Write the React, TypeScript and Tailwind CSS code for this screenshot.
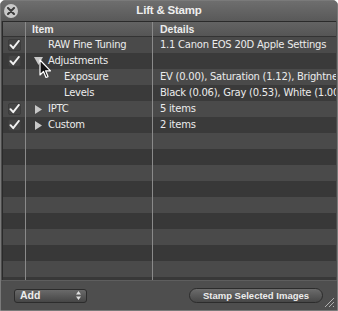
import React from 'react';

type Row = { check: boolean; item: string; details: string; indent: number; arrow?: 'open' | 'closed' };

const rows: Row[] = [
  { check: true, item: 'RAW Fine Tuning', details: '1.1 Canon EOS 20D Apple Settings', indent: 0 },
  { check: true, item: 'Adjustments', details: '', indent: 0, arrow: 'open' },
  { check: false, item: 'Exposure', details: 'EV (0.00), Saturation (1.12), Brightness (0.00)', indent: 1 },
  { check: false, item: 'Levels', details: 'Black (0.06), Gray (0.53), White (1.00)', indent: 1 },
  { check: true, item: 'IPTC', details: '5 items', indent: 0, arrow: 'closed' },
  { check: true, item: 'Custom', details: '2 items', indent: 0, arrow: 'closed' },
];

const boldFont = { fontFamily: '"Liberation Sans", Arial, sans-serif' };

function Check() {
  return (
    <div className="w-[13px] h-[12px] rounded-[2px] bg-[#454545] border border-[#3c3c3c] flex items-center justify-center">
      <svg width="11" height="10" viewBox="0 0 11 10">
        <path d="M1.5 5.2 L4.2 8.2 L9.8 1" fill="none" stroke="#f2f2f2" strokeWidth="2" strokeLinecap="round" strokeLinejoin="round" />
      </svg>
    </div>
  );
}

function Arrow({ open }: { open: boolean }) {
  return open ? (
    <svg width="9" height="8" viewBox="0 0 9 8"><path d="M0 0 H9 L4.5 8 Z" fill="#c8c8c8" /></svg>
  ) : (
    <svg width="7" height="9" viewBox="0 0 7 9"><path d="M0 0 L7 4.5 L0 9 Z" fill="#c8c8c8" /></svg>
  );
}

export default function App() {
  const filler = Array.from({ length: 10 });
  return (
    <div
      className="relative w-[338px] h-[311px] bg-[#4c4c4c] flex flex-col overflow-hidden rounded-t-[5px] border border-[#7a7a7a] text-[#ececec]"
      style={{ fontFamily: '"DejaVu Sans", "Lucida Grande", sans-serif' }}
    >
      {/* title bar */}
      <div className="relative h-[20px] shrink-0 flex items-center justify-center bg-gradient-to-b from-[#6e6e6e] to-[#595959]">
        <div className="absolute left-[3px] top-[3px] w-[14px] h-[14px] rounded-full bg-[#c9c9c9] flex items-center justify-center">
          <svg width="8" height="8" viewBox="0 0 8 8">
            <path d="M1 1 L7 7 M7 1 L1 7" stroke="#3a3a3a" strokeWidth="2" strokeLinecap="round" />
          </svg>
        </div>
        <span className="text-[11.5px] font-bold text-[#eeeeee] tracking-[-0.2px]" style={boldFont}>Lift &amp; Stamp</span>
      </div>

      {/* table */}
      <div className="flex-1 mx-[1px] border-l border-t border-[#2a2a2a] overflow-hidden bg-[#3a3a3a]">
        <div
          className="grid grid-cols-[23px_127px_1fr] h-[15px] bg-gradient-to-b from-[#636363] to-[#555555] border-b border-[#333] text-[10.5px] font-bold leading-[15px]"
          style={boldFont}
        >
          <div className="border-r border-[#8a8a8a]" />
          <div className="pl-[6px] border-r border-[#8a8a8a]">Item</div>
          <div className="pl-[7px]">Details</div>
        </div>
        {rows.map((r, i) => (
          <div
            key={r.item}
            className={`grid grid-cols-[23px_127px_1fr] h-[16px] text-[10px] tracking-[-0.25px] leading-[16px] ${i % 2 === 0 ? 'bg-[#4a4a4a]' : 'bg-[#3a3a3a]'}`}
          >
            <div className="border-r border-[#8a8a8a] flex items-center justify-center">
              {r.check && <Check />}
            </div>
            <div className="border-r border-[#8a8a8a] flex items-center whitespace-nowrap overflow-hidden">
              <div className="w-[22px] shrink-0 flex items-center justify-center pl-[2px]">
                {r.arrow && <Arrow open={r.arrow === 'open'} />}
              </div>
              <span className={r.indent ? 'pl-[16px]' : ''}>{r.item}</span>
            </div>
            <div className="pl-[7px] whitespace-nowrap overflow-hidden">{r.details}</div>
          </div>
        ))}
        {filler.map((_, i) => (
          <div
            key={i}
            className={`grid grid-cols-[23px_127px_1fr] h-[16px] ${i % 2 === 0 ? 'bg-[#4a4a4a]' : 'bg-[#383838]'}`}
          >
            <div className="border-r border-[#8a8a8a]" />
            <div className="border-r border-[#8a8a8a]" />
            <div />
          </div>
        ))}
      </div>

      {/* bottom bar */}
      <div className="h-[30px] shrink-0 flex items-center justify-between pl-[13px] pr-[14px] border-t border-[#5e5e5e] bg-[#4e4e4e]" style={boldFont}>
        <div className="w-[73px] h-[14px] rounded-[3px] border border-[#2c2c2c] bg-gradient-to-b from-[#6a6a6a] to-[#464646] flex items-center justify-between pl-[5px] pr-[5px]">
          <span className="text-[10.5px] font-bold leading-none">Add</span>
          <svg width="5" height="9" viewBox="0 0 5 9">
            <path d="M0 3.5 L2.5 0 L5 3.5 Z M0 5.5 L2.5 9 L5 5.5 Z" fill="#e0e0e0" />
          </svg>
        </div>
        <div className="w-[134px] h-[15px] rounded-full border border-[#2c2c2c] bg-gradient-to-b from-[#6c6c6c] to-[#474747] flex items-center justify-center">
          <span className="text-[9.5px] font-bold leading-none whitespace-nowrap">Stamp Selected Images</span>
        </div>
      </div>

      {/* resize grip */}
      <svg className="absolute right-[2px] bottom-[2px]" width="11" height="11" viewBox="0 0 11 11">
        <path d="M10 1 L1 10 M10 5 L5 10 M10 9 L9 10" stroke="#b0b0b0" strokeWidth="1" />
      </svg>

      {/* mouse pointer */}
      <svg className="absolute left-[38px] top-[58px]" width="13" height="21" viewBox="0 0 13 21">
        <path d="M1 1 L1 16 L4.5 12.5 L7 18.5 L9 17.6 L6.6 11.8 L11.5 11.8 Z" fill="#111" stroke="#fff" strokeWidth="1.2" strokeLinejoin="round" />
      </svg>
    </div>
  );
}
